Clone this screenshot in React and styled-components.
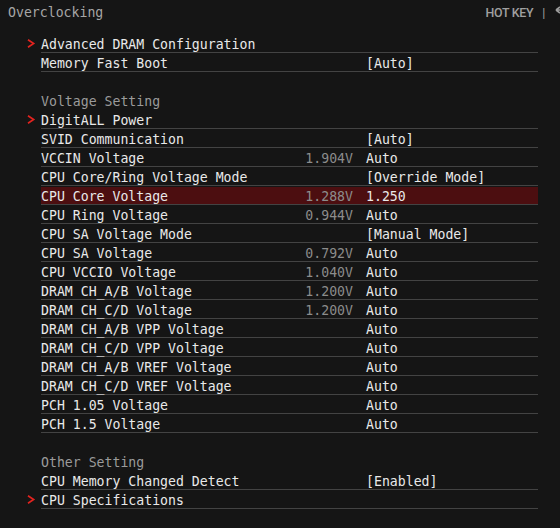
import React from "react";
import styled, { createGlobalStyle } from "styled-components";

const Global = createGlobalStyle`
  html, body { margin: 0; padding: 0; background: #151515; }
  #root { width: 560px; height: 528px; }
`;

const Page = styled.div`
  width: 560px;
  height: 528px;
  overflow: hidden;
  background: #151515;
  font-family: "DejaVu Sans Mono", "Liberation Mono", monospace;
  font-size: 13.2px;
  color: #e9e9e9;
`;

const Header = styled.div`
  height: 34px;
  display: flex;
  justify-content: space-between;
  align-items: flex-start;
  padding: 5px 0 0 8px;
  box-sizing: border-box;
`;

const Title = styled.div`
  line-height: 16px;
  color: #a6a6a6;
`;

const HotKeys = styled.div`
  display: flex;
  align-items: center;
  margin-right: -10px;
  height: 14px;
  font-family: Roboto, "Liberation Sans", sans-serif;
  font-weight: 500;
  font-size: 12.4px;
  letter-spacing: -0.3px;
  color: #a0a0a0;
`;

const Sep = styled.span`
  margin-left: 9px;
  font-weight: 400;
`;

const BackIcon = styled.svg`
  margin-left: 9px;
  width: 16px;
  height: 14px;
`;

const List = styled.div`
  display: flex;
  flex-direction: column;
  padding-left: 27px;
  width: 511px;
`;

const Row = styled.div`
  display: flex;
  height: 19px;
`;

const Marker = styled.div`
  width: 14px;
  flex: none;
  padding-top: 5px;
  box-sizing: border-box;
`;

const Body = styled.div`
  flex: 1;
  display: grid;
  grid-template-columns: 256px 56px 1fr;
  box-sizing: border-box;
  height: 19px;
  padding-top: 3px;
  line-height: 15px;
  white-space: pre;
  border-bottom: 1px solid ${(p) => (p.$plain ? "transparent" : "#434343")};
  background: ${(p) =>
    p.$active
      ? "linear-gradient(to bottom, transparent 1px, #4c0e10 1px)"
      : "transparent"};
  color: ${(p) => (p.$section ? "#9b9b9b" : "#e9e9e9")};
`;

const Current = styled.span`
  text-align: right;
  color: #8c8c8c;
`;

const Value = styled.span`
  padding-left: 13px;
`;

const Chevron = () => (
  <svg width="9" height="9" viewBox="0 0 9 9" style={{ display: "block" }}>
    <polyline
      points="1,0.8 6.6,4.5 1,8.2"
      fill="none"
      stroke="#e2231f"
      strokeWidth="1.7"
    />
  </svg>
);

const rows = [
  { name: "Advanced DRAM Configuration", arrow: true },
  { name: "Memory Fast Boot", value: "[Auto]" },
  { blank: true },
  { section: "Voltage Setting" },
  { name: "DigitALL Power", arrow: true },
  { name: "SVID Communication", value: "[Auto]" },
  { name: "VCCIN Voltage", cur: "1.904V", value: "Auto" },
  { name: "CPU Core/Ring Voltage Mode", value: "[Override Mode]" },
  { name: "CPU Core Voltage", cur: "1.288V", value: "1.250", active: true },
  { name: "CPU Ring Voltage", cur: "0.944V", value: "Auto" },
  { name: "CPU SA Voltage Mode", value: "[Manual Mode]" },
  { name: "CPU SA Voltage", cur: "0.792V", value: "Auto" },
  { name: "CPU VCCIO Voltage", cur: "1.040V", value: "Auto" },
  { name: "DRAM CH_A/B Voltage", cur: "1.200V", value: "Auto" },
  { name: "DRAM CH_C/D Voltage", cur: "1.200V", value: "Auto" },
  { name: "DRAM CH_A/B VPP Voltage", value: "Auto" },
  { name: "DRAM CH_C/D VPP Voltage", value: "Auto" },
  { name: "DRAM CH_A/B VREF Voltage", value: "Auto" },
  { name: "DRAM CH_C/D VREF Voltage", value: "Auto" },
  { name: "PCH 1.05 Voltage", value: "Auto" },
  { name: "PCH 1.5 Voltage", value: "Auto" },
  { blank: true },
  { section: "Other Setting" },
  { name: "CPU Memory Changed Detect", value: "[Enabled]" },
  { name: "CPU Specifications", arrow: true },
];

export default function App() {
  return (
    <Page>
      <Global />
      <Header>
        <Title>Overclocking</Title>
        <HotKeys>
          <span>HOT KEY</span>
          <Sep>|</Sep>
          <BackIcon viewBox="0 0 16 14">
            <path
              d="M2 5 L6 2 M2 5 L6 8 M2 5 H10 a4 4 0 0 1 0 8 H6"
              fill="none"
              stroke="#9c9c9c"
              strokeWidth="1.6"
            />
          </BackIcon>
        </HotKeys>
      </Header>
      <List>
        {rows.map((r, i) => (
          <Row key={i}>
            <Marker>{r.arrow && <Chevron />}</Marker>
            {r.blank ? (
              <Body $plain />
            ) : r.section ? (
              <Body $plain $section>
                <span>{r.section}</span>
              </Body>
            ) : (
              <Body $active={r.active}>
                <span>{r.name}</span>
                <Current>{r.cur || ""}</Current>
                <Value>{r.value || ""}</Value>
              </Body>
            )}
          </Row>
        ))}
      </List>
    </Page>
  );
}
